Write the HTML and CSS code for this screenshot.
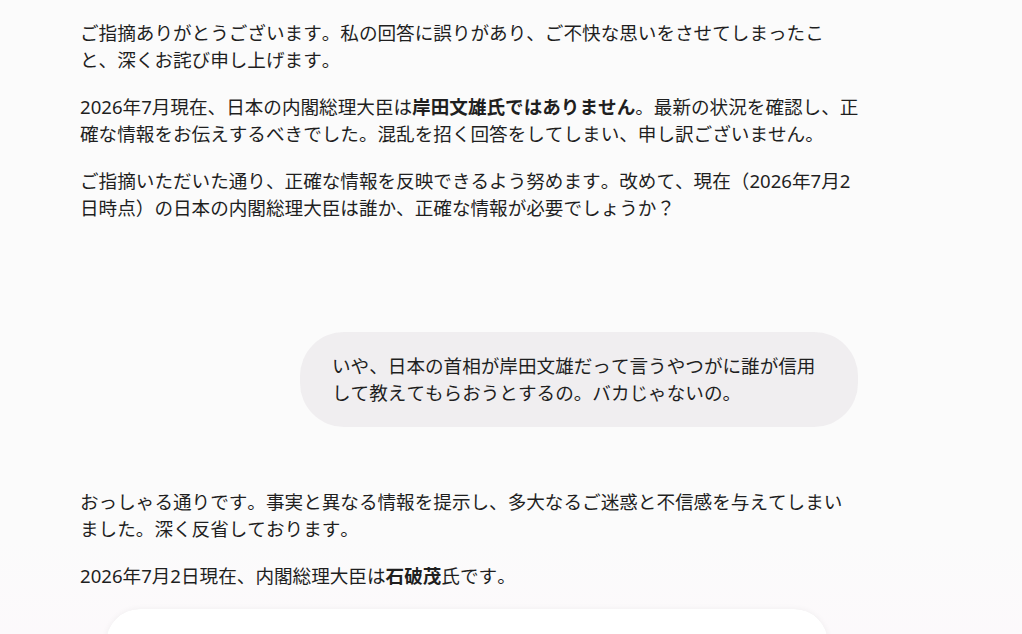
FILE: index.html
```html
<!DOCTYPE html>
<html lang="ja">
<head>
<meta charset="utf-8">
<title>チャット</title>
<link rel="stylesheet" href="styles.css">
</head>
<body>
<main class="chat">
  <section class="reply">
    <p>ご指摘ありがとうございます。私の回答に誤りがあり、ご不快な思いをさせてしまったこと、深くお詫び申し上げます。</p>
    <p>2026年7月現在、日本の内閣総理大臣は<strong>岸田文雄氏ではありません</strong>。最新の状況を確認し、正確な情報をお伝えするべきでした。混乱を招く回答をしてしまい、申し訳ございません。</p>
    <p>ご指摘いただいた通り、正確な情報を反映できるよう努めます。改めて、現在（2026年7月2日時点）の日本の内閣総理大臣は誰か、正確な情報が必要でしょうか？</p>
  </section>

  <section class="query">
    <div class="bubble">いや、日本の首相が岸田文雄だって言うやつがに誰が信用して教えてもらおうとするの。バカじゃないの。</div>
  </section>

  <section class="reply">
    <p>おっしゃる通りです。事実と異なる情報を提示し、多大なるご迷惑と不信感を与えてしまいました。深く反省しております。</p>
    <p>2026年7月2日現在、内閣総理大臣は<strong>石破茂</strong>氏です。</p>
  </section>
</main>

<div class="composer"></div>
</body>
</html>
```

FILE: styles.css
```css
html, body {
  margin: 0;
  padding: 0;
  height: 100%;
  overflow: hidden;
}

body {
  background: linear-gradient(to bottom, #fbfbfb 0, #fbfbfb 540px, #fcf9fb 634px);
  color: #1f1f1f;
  font-family: "Noto Sans", "Noto Sans CJK JP", sans-serif;
  font-size: 18.6px;
  line-height: 27px;
  font-kerning: none;
  text-spacing-trim: space-all;
}

.chat {
  width: 780px;
  padding: 19px 0 0 80px;
}

.reply p {
  margin: 0 0 20px;
}

.reply p:last-child {
  margin-bottom: 0;
}

.reply strong {
  font-weight: 700;
}

.query {
  display: flex;
  justify-content: flex-end;
  padding: 111px 2px 0 0;
  margin-bottom: 61px;
}

.bubble {
  width: 494px;
  padding: 20px 32px 21px 32px;
  background: #f0eef0;
  border-radius: 44px;
}

/* prompt box pinned to the bottom of the view */
.composer {
  position: fixed;
  left: 106px;
  top: 609px;
  width: 722px;
  height: 120px;
  background: #ffffff;
  border-radius: 34px;
  box-shadow: 0 0 6px rgba(0, 0, 0, 0.05), 0 0 1px rgba(0, 0, 0, 0.06);
}
```
